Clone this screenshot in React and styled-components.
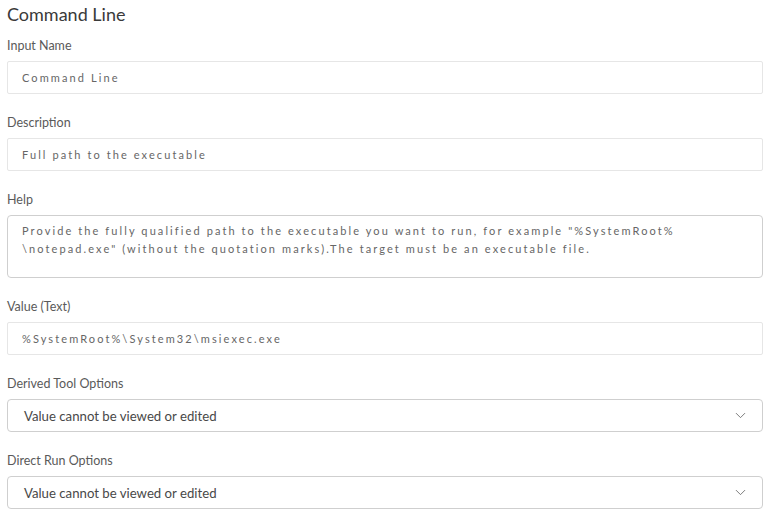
import React from 'react';
import styled, { createGlobalStyle } from 'styled-components';
import { ChevronDown } from 'lucide-react';

const GlobalStyle = createGlobalStyle`
  body {
    margin: 0;
    background: #ffffff;
    font-family: Lato, "Open Sans", sans-serif;
  }
`

const Page = styled.div`
  display: flex;
  flex-direction: column;
  padding: 3px 12px 0 7px;
`

const Title = styled.h2`
  margin: 0 0 13px;
  font-size: 18px;
  line-height: 22px;
  font-weight: 400;
  color: #3a3a3a;
`

const Field = styled.div`
  display: flex;
  flex-direction: column;
  gap: 7px;
  margin-bottom: 21px;
`

const Label = styled.label`
  font-size: 12.5px;
  line-height: 16px;
  color: #5a5a5a;
`

const TextBox = styled.div`
  box-sizing: border-box;
  height: 33px;
  display: flex;
  align-items: center;
  padding: 0 14px;
  border: 1px solid #e6e6e6;
  border-radius: 2px;
  font-size: 11px;
  letter-spacing: 2.1px;
  color: #666;
`

const HelpBox = styled.div`
  box-sizing: border-box;
  height: 63px;
  padding: 6px 14px;
  border: 1px solid #cfcfcf;
  border-radius: 4px;
  font-size: 11px;
  line-height: 18px;
  letter-spacing: 2.1px;
  color: #666;
`

const Select = styled.div`
  box-sizing: border-box;
  height: 33px;
  display: flex;
  align-items: center;
  justify-content: space-between;
  padding: 0 16px;
  border: 1px solid #cfcfcf;
  border-radius: 4px;
  font-size: 13.2px;
  color: #484848;

  svg {
    color: #666;
    margin-right: -3px;
  }
`

const fields = [
  { label: 'Input Name', value: 'Command Line' },
  { label: 'Description', value: 'Full path to the executable' },
]

const App = () => {
  return (
    <>
      <GlobalStyle />
      <Page>
        <Title>Command Line</Title>
        {fields.map((f) => (
          <Field key={f.label}>
            <Label>{f.label}</Label>
            <TextBox>{f.value}</TextBox>
          </Field>
        ))}
        <Field>
          <Label>Help</Label>
          <HelpBox>
            Provide the fully qualified path to the executable you want to run, for example "%SystemRoot%
            <br />
            \notepad.exe" (without the quotation marks).The target must be an executable file.
          </HelpBox>
        </Field>
        <Field>
          <Label>Value (Text)</Label>
          <TextBox>%SystemRoot%\System32\msiexec.exe</TextBox>
        </Field>
        <Field>
          <Label>Derived Tool Options</Label>
          <Select>
            <span>Value cannot be viewed or edited</span>
            <ChevronDown size={17} strokeWidth={1.2} />
          </Select>
        </Field>
        <Field>
          <Label>Direct Run Options</Label>
          <Select>
            <span>Value cannot be viewed or edited</span>
            <ChevronDown size={17} strokeWidth={1.2} />
          </Select>
        </Field>
      </Page>
    </>
  )
}

export default App;
